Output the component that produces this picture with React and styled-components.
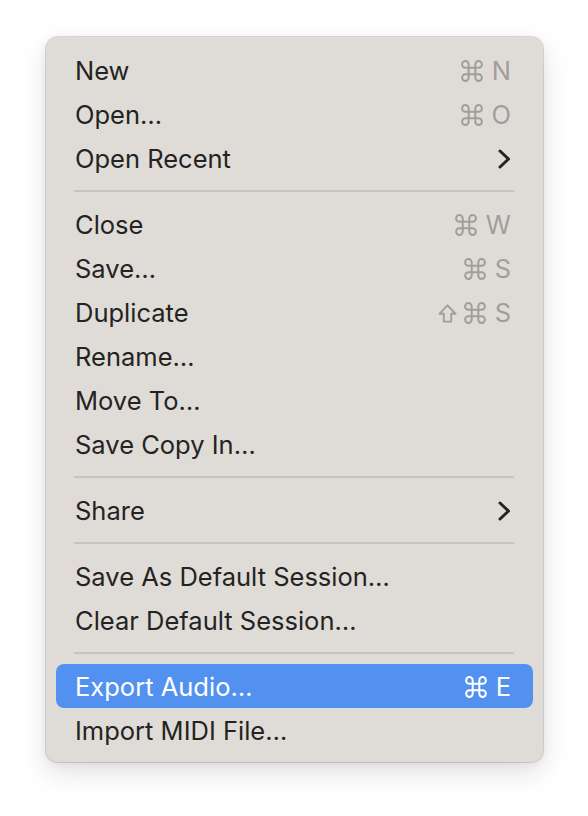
import React from "react";
import styled, { createGlobalStyle } from "styled-components";

const Global = createGlobalStyle`
  html, body { margin: 0; padding: 0; background: #ffffff; }
  body { font-family: Inter, "Noto Sans", "Liberation Sans", sans-serif; -webkit-font-smoothing: antialiased; }
`;

const Page = styled.div`
  padding: 37px 0 40px 46px;
`;

const Panel = styled.div`
  width: 497px;
  box-sizing: border-box;
  padding: 11px 0 10px;
  background: #dfdcd8;
  border-radius: 12px;
  box-shadow: 0 0 0 1px rgba(0, 0, 0, 0.13), 0 10px 28px rgba(0, 0, 0, 0.13),
    0 2px 8px rgba(0, 0, 0, 0.06);
`;

const Item = styled.div`
  display: flex;
  align-items: center;
  justify-content: space-between;
  box-sizing: border-box;
  height: 44px;
  margin: 0 10px;
  padding: 2px 22px 0 19px;
  border-radius: 8px;
  font-size: 25.5px;
  line-height: 42px;
  color: ${(p) => (p.$active ? "#ffffff" : "#242322")};
  background: ${(p) => (p.$active ? "#5391f0" : "transparent")};
`;

const Label = styled.span`
  white-space: nowrap;
`;

const Shortcut = styled.span`
  display: flex;
  align-items: center;
  gap: 7px;
  color: ${(p) => (p.$active ? "#ffffff" : "#a19e9a")};
`;

const Key = styled.span`
  margin-left: 2px;
`;

const Separator = styled.div`
  height: 2px;
  margin: 10px 29px 10px 28px;
  background: #c6c3be;
`;

const Cmd = () => (
  <svg width="22" height="22" viewBox="2 2 20 20" fill="none" stroke="currentColor" strokeWidth="1.8" strokeLinecap="round" strokeLinejoin="round">
    <path d="M15 6v12a3 3 0 1 0 3-3H6a3 3 0 1 0 3 3V6a3 3 0 1 0-3 3h12a3 3 0 1 0-3-3" />
  </svg>
);

const Shift = () => (
  <svg width="19" height="19" viewBox="0 0 19 19" fill="none" stroke="currentColor" strokeWidth="1.9" strokeLinejoin="round">
    <path d="M9.5 1.3 L17.6 9.8 H13.2 V17.6 H5.8 V9.8 H1.4 Z" />
  </svg>
);

const Chevron = () => (
  <svg width="13" height="22" viewBox="0 0 13 22" fill="none" stroke="currentColor" strokeWidth="3" strokeLinecap="round" strokeLinejoin="round">
    <polyline points="2,3 10.5,11 2,19" />
  </svg>
);

const groups = [
  [
    { label: "New", keys: ["cmd", "N"] },
    { label: "Open…", keys: ["cmd", "O"] },
    { label: "Open Recent", sub: true },
  ],
  [
    { label: "Close", keys: ["cmd", "W"] },
    { label: "Save…", keys: ["cmd", "S"] },
    { label: "Duplicate", keys: ["shift", "cmd", "S"] },
    { label: "Rename…" },
    { label: "Move To…" },
    { label: "Save Copy In…" },
  ],
  [{ label: "Share", sub: true }],
  [
    { label: "Save As Default Session…" },
    { label: "Clear Default Session…" },
  ],
  [
    { label: "Export Audio…", keys: ["cmd", "E"], active: true },
    { label: "Import MIDI File…" },
  ],
];

const renderKey = (k, i) => {
  if (k === "cmd") return <Cmd key={i} />;
  if (k === "shift") return <Shift key={i} />;
  return <Key key={i}>{k}</Key>;
};

export default function App() {
  return (
    <>
      <Global />
      <Page>
        <Panel>
          {groups.map((g, gi) => (
            <React.Fragment key={gi}>
              {gi > 0 && <Separator />}
              {g.map((it) => (
                <Item key={it.label} $active={it.active}>
                  <Label>{it.label}</Label>
                  {it.keys && (
                    <Shortcut $active={it.active}>{it.keys.map(renderKey)}</Shortcut>
                  )}
                  {it.sub && <Chevron />}
                </Item>
              ))}
            </React.Fragment>
          ))}
        </Panel>
      </Page>
    </>
  );
}
